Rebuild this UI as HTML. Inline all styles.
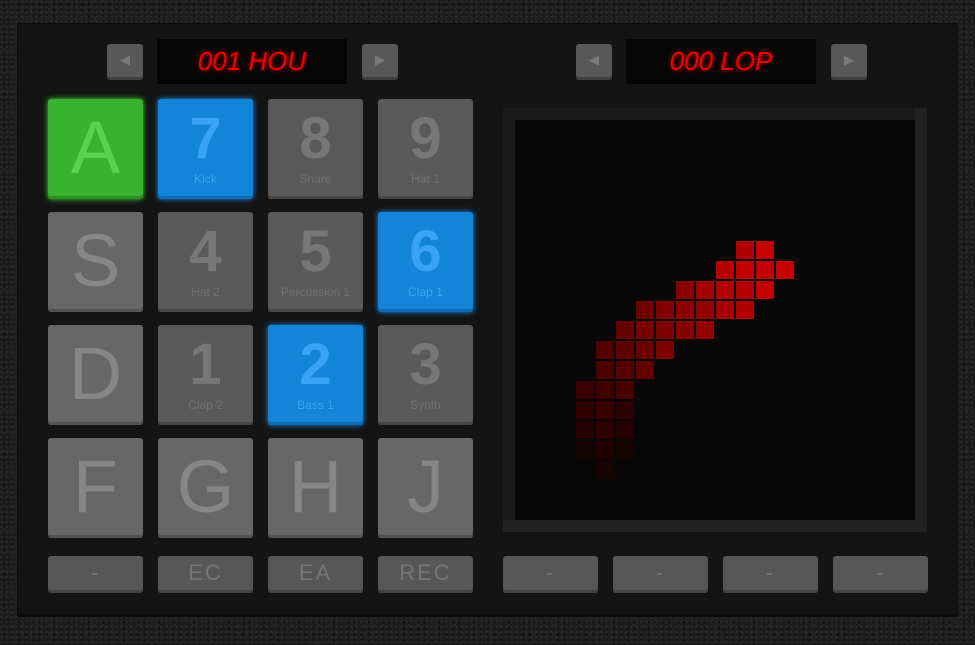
<!DOCTYPE html>
<html><head><meta charset="utf-8">
<style>
*{margin:0;padding:0;box-sizing:border-box}
html,body{width:975px;height:645px;overflow:hidden}
body{background:#1d1d1d;position:relative;font-family:"Liberation Sans",sans-serif;
background-image:radial-gradient(circle at 30% 40%,#2a2a2a 1px,transparent 1.5px),radial-gradient(circle at 70% 70%,#111 1px,transparent 1.5px),radial-gradient(circle at 50% 20%,#262626 1px,transparent 1.6px);
background-size:5px 5px,7px 6px,9px 8px;}
.panel{position:absolute;left:17px;top:23px;width:941px;height:592px;background:#141414;border:1px solid #0a0a0a;box-shadow:0 2px 0 #0b0b0b}
.a{position:absolute}
.pad{position:absolute;width:95px;height:100px;border-radius:3px;background:#5a5a5a;box-shadow:inset 0 -3px 0 #474747;text-align:center;color:#777}
.pad .big{position:absolute;left:0;right:0;top:10px;font-size:58px;font-weight:bold;line-height:60px}
.pad .sm{position:absolute;left:0;right:0;top:73px;font-size:12px;color:#707070}
.pad.l{background:#676767;box-shadow:inset 0 -3px 0 #535353;color:#868686}
.pad.l .big{top:12px;font-size:74px;line-height:74px;font-weight:normal}
.pad.b{background:#1384d8;box-shadow:inset 0 -3px 0 #0d6ab3,0 0 6px #1c8ef0;color:#3aa3f5}
.pad.b .sm{color:#3aa3f5}
.pad.g{background:#38b22f;box-shadow:inset 0 -3px 0 #2a8f23,0 0 6px #3fd534;color:#5bd150}
.pad.g .big{top:12px;font-size:74px;line-height:74px;font-weight:normal}
.btn{position:absolute;width:95px;height:37px;border-radius:3px;background:#575757;box-shadow:inset 0 -3px 0 #444;color:#767676;text-align:center;font-size:22px;line-height:34px;letter-spacing:2px}
.arr{position:absolute;width:36px;height:36px;border-radius:3px;background:#585858;box-shadow:inset 0 -3px 0 #404040;color:#7a7a7a;font-size:13px;text-align:center;line-height:32px}
.disp{position:absolute;width:190px;height:45px;background:#060606;color:#e00;font-family:"Liberation Sans",sans-serif;font-style:italic;font-size:26px;line-height:45px;text-align:center;text-shadow:0 0 4px #c00}
.c{position:absolute;width:18px;height:18px}
</style></head><body>
<div class="panel"></div>
<div class="arr" style="left:107px;top:44px">&#9664;</div>
<div class="disp" style="left:157px;top:39px">001 HOU</div>
<div class="arr" style="left:362px;top:44px">&#9654;</div>
<div class="arr" style="left:576px;top:44px">&#9664;</div>
<div class="disp" style="left:626px;top:39px">000 LOP</div>
<div class="arr" style="left:831px;top:44px">&#9654;</div>

<div class="pad g" style="left:48px;top:99px"><div class="big">A</div></div>
<div class="pad b" style="left:158px;top:99px"><div class="big">7</div><div class="sm">Kick</div></div>
<div class="pad" style="left:268px;top:99px"><div class="big">8</div><div class="sm">Snare</div></div>
<div class="pad" style="left:378px;top:99px"><div class="big">9</div><div class="sm">Hat 1</div></div>

<div class="pad l" style="left:48px;top:212px"><div class="big">S</div></div>
<div class="pad" style="left:158px;top:212px"><div class="big">4</div><div class="sm">Hat 2</div></div>
<div class="pad" style="left:268px;top:212px"><div class="big">5</div><div class="sm">Percussion 1</div></div>
<div class="pad b" style="left:378px;top:212px"><div class="big">6</div><div class="sm">Clap 1</div></div>

<div class="pad l" style="left:48px;top:325px"><div class="big">D</div></div>
<div class="pad" style="left:158px;top:325px"><div class="big">1</div><div class="sm">Clap 2</div></div>
<div class="pad b" style="left:268px;top:325px"><div class="big">2</div><div class="sm">Bass 1</div></div>
<div class="pad" style="left:378px;top:325px"><div class="big">3</div><div class="sm">Synth</div></div>

<div class="pad l" style="left:48px;top:438px"><div class="big">F</div></div>
<div class="pad l" style="left:158px;top:438px"><div class="big">G</div></div>
<div class="pad l" style="left:268px;top:438px"><div class="big">H</div></div>
<div class="pad l" style="left:378px;top:438px"><div class="big">J</div></div>

<div class="btn" style="left:48px;top:556px">-</div>
<div class="btn" style="left:158px;top:556px">EC</div>
<div class="btn" style="left:268px;top:556px">EA</div>
<div class="btn" style="left:378px;top:556px">REC</div>
<div class="btn" style="left:503px;top:556px">-</div>
<div class="btn" style="left:613px;top:556px">-</div>
<div class="btn" style="left:723px;top:556px">-</div>
<div class="btn" style="left:833px;top:556px">-</div>

<div class="a" style="left:503px;top:108px;width:424px;height:424px;background:#1b1b1b;border-right:12px solid #222;border-bottom:12px solid #222"></div>
<div class="a" style="left:515px;top:120px;width:400px;height:400px;background:#070707"></div>

<div class="c" style="left:736px;top:241px;background:#b00000"></div>
<div class="c" style="left:756px;top:241px;background:#c40000"></div>
<div class="c" style="left:716px;top:261px;background:#b40000"></div>
<div class="c" style="left:736px;top:261px;background:#c20000"></div>
<div class="c" style="left:756px;top:261px;background:#c20000"></div>
<div class="c" style="left:776px;top:261px;background:#c40000"></div>
<div class="c" style="left:676px;top:281px;background:#8a0000"></div>
<div class="c" style="left:696px;top:281px;background:#a50000"></div>
<div class="c" style="left:716px;top:281px;background:#b00000"></div>
<div class="c" style="left:736px;top:281px;background:#b50000"></div>
<div class="c" style="left:756px;top:281px;background:#c20000"></div>
<div class="c" style="left:636px;top:301px;background:#6e0000"></div>
<div class="c" style="left:656px;top:301px;background:#820000"></div>
<div class="c" style="left:676px;top:301px;background:#8c0000"></div>
<div class="c" style="left:696px;top:301px;background:#940000"></div>
<div class="c" style="left:716px;top:301px;background:#a80000"></div>
<div class="c" style="left:736px;top:301px;background:#b20000"></div>
<div class="c" style="left:616px;top:321px;background:#680000"></div>
<div class="c" style="left:636px;top:321px;background:#780000"></div>
<div class="c" style="left:656px;top:321px;background:#7e0000"></div>
<div class="c" style="left:676px;top:321px;background:#880000"></div>
<div class="c" style="left:696px;top:321px;background:#940000"></div>
<div class="c" style="left:596px;top:341px;background:#520000"></div>
<div class="c" style="left:616px;top:341px;background:#600000"></div>
<div class="c" style="left:636px;top:341px;background:#6c0000"></div>
<div class="c" style="left:656px;top:341px;background:#7c0000"></div>
<div class="c" style="left:596px;top:361px;background:#4c0000"></div>
<div class="c" style="left:616px;top:361px;background:#560000"></div>
<div class="c" style="left:636px;top:361px;background:#620000"></div>
<div class="c" style="left:576px;top:381px;background:#3c0000"></div>
<div class="c" style="left:596px;top:381px;background:#420000"></div>
<div class="c" style="left:616px;top:381px;background:#4a0000"></div>
<div class="c" style="left:576px;top:401px;background:#300000"></div>
<div class="c" style="left:596px;top:401px;background:#3a0000"></div>
<div class="c" style="left:616px;top:401px;background:#2c0000"></div>
<div class="c" style="left:576px;top:421px;background:#260000"></div>
<div class="c" style="left:596px;top:421px;background:#2e0000"></div>
<div class="c" style="left:616px;top:421px;background:#240000"></div>
<div class="c" style="left:576px;top:441px;background:#180303"></div>
<div class="c" style="left:596px;top:441px;background:#220000"></div>
<div class="c" style="left:616px;top:441px;background:#180303"></div>
<div class="c" style="left:596px;top:461px;background:#160404"></div>
</body></html>
